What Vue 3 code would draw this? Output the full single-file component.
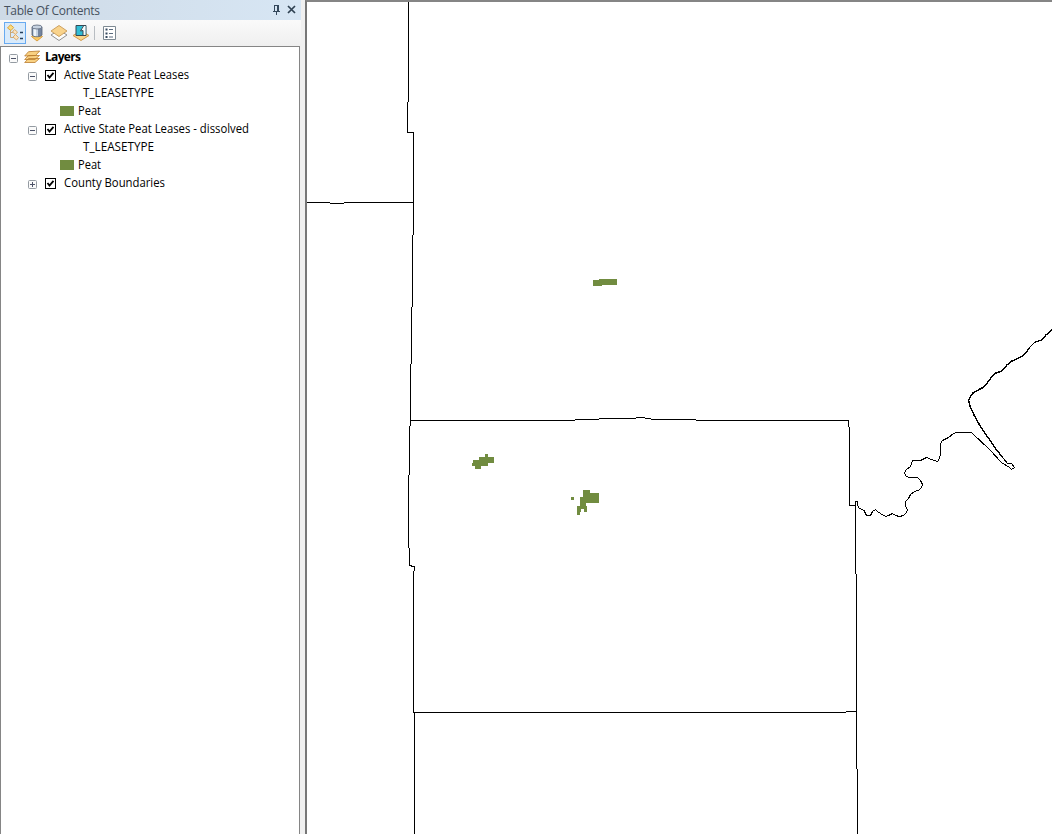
<script setup>
const rows = [
  { kind: 'layer', label: 'Active State Peat Leases', w: 125, open: true },
  { kind: 'field', label: 'T_LEASETYPE', w: 71 },
  { kind: 'symbol', label: 'Peat', w: 23 },
  { kind: 'layer', label: 'Active State Peat Leases - dissolved', w: 185, open: true },
  { kind: 'field', label: 'T_LEASETYPE', w: 71 },
  { kind: 'symbol', label: 'Peat', w: 23 },
  { kind: 'layer', label: 'County Boundaries', w: 101, open: false },
]
</script>

<template>
  <div class="window">
    <aside class="panel">
      <header class="titlebar">
        <svg class="label" width="98" height="18"><text x="0" y="15" textLength="96">Table Of Contents</text></svg>
        <svg class="pin" width="9" height="10" shape-rendering="crispEdges"><path d="M2.5 6V.5H6.5V6M5.5 1V6M1 6.5H8M4.5 7V10" /></svg>
        <svg class="close" width="9" height="9"><path d="M1 1L8 8M8 1L1 8" /></svg>
      </header>
      <nav class="toolbar">
        <button class="tool active">
          <svg width="18" height="18" viewBox="0 0 18 18">
            <path d="M4.500 6V13.500H8M4.500 8.500H8" fill="none" stroke="#c9a878" />
            <path d="M4.500 .8L7.700 3.500L5 6.500L1.500 4Z" fill="#fbdc80" stroke="#dca53c" />
            <path d="M8.500 5.500L11.500 8L9.500 10.500L6.500 8ZM9.500 10.500L12.500 13.500L10.500 16L7 13Z" fill="#fae3bf" stroke="#d8ad73" />
            <path d="M14 8.500H17M14 14.500H17" stroke="#243f5c" stroke-width="1.400" />
          </svg>
        </button>
        <button class="tool">
          <svg width="18" height="18" viewBox="0 0 18 18">
            <path d="M3.500 12.500L9 9L14.500 12.500L9 17Z" fill="#f9c964" stroke="#dba044" />
            <path d="M4 3V11C5 13.300 13 13.300 14 11V3" fill="#74859f" stroke="#566276" stroke-width=".8" />
            <path d="M5 4V11.300C6 12.200 8 12.500 10 12.300V4Z" fill="#c5d3e3" />
            <path d="M6 4H8V12H6Z" fill="#edf4fb" />
            <ellipse cx="9" cy="3" rx="5" ry="2" fill="#c7d3e1" stroke="#596579" stroke-width=".8" />
          </svg>
        </button>
        <button class="tool">
          <svg width="18" height="18" viewBox="0 0 18 18">
            <path d="M1 11L9 6L17 11L9 16.500Z" fill="#fcfcfa" stroke="#929292" />
            <path d="M1 7L9 1.500L17 7L9 12.500Z" fill="#f9d38b" stroke="#cda160" />
          </svg>
        </button>
        <button class="tool">
          <svg width="18" height="18" viewBox="0 0 18 18">
            <path d="M1 11.500L9 7L17 11.500L9 16.500Z" fill="#fad58b" stroke="#d29a4d" />
            <path d="M4 1.500H14V11.500H4Z" fill="#30bdd5" stroke="#344955" />
            <path d="M11 2H13.500V11H11V6.500L8.500 7L10 4Z" fill="#f8fbfc" />
            <path d="M11.500 2L8.500 7L11 6.500V11" fill="none" stroke="#344955" />
          </svg>
        </button>
        <i class="separator"></i>
        <button class="tool list-tool">
          <svg width="13" height="14" viewBox="0 0 13 14">
            <path d="M.5 .5H12.500V13.500H.5Z" fill="#fff" stroke="#7d8992" />
            <path d="M6 3.500H10M6 7.500H10M6 11H10" stroke="#5a6b7e" />
            <path d="M2.500 2.500H4.500V4.500H2.500ZM2.500 6.500H4.500V8.500H2.500ZM2.500 10H4.500V12H2.500Z" fill="#35495e" />
          </svg>
        </button>
      </nav>
      <main class="tree">
        <div class="row root">
          <svg class="expander" width="9" height="9"><rect x=".5" y=".5" width="8" height="8" rx="1" /><path d="M2 4.500H7" /></svg>
          <svg class="stack" width="17" height="14" viewBox="0 0 17 14">
            <path d="M.7 12.500L4.500 8.500H15.500L11 12.500Z M.7 9.500L4.500 5.500H15.500L11 9.500Z M.7 6L4.500 1.700L15.700 1L11.500 5.500Z" />
          </svg>
          <svg class="label bold" width="40" height="18"><text x="0" y="13" textLength="36">Layers</text></svg>
        </div>
        <div v-for="(row, i) in rows" :key="i" class="row" :class="row.kind">
          <template v-if="row.kind === 'layer'">
            <svg class="expander" width="9" height="9"><rect x=".5" y=".5" width="8" height="8" rx="1" /><path :d="row.open ? 'M2 4.5H7' : 'M2 4.5H7M4.5 2V7'" /></svg>
            <svg class="check" width="11" height="11"><rect x=".5" y=".5" width="10" height="10" /><path d="M2.500 5L4.500 7.500L8.500 2.800" /></svg>
          </template>
          <i v-if="row.kind === 'symbol'" class="swatch"></i>
          <svg class="label" :width="row.w + 2" height="18"><text x="0" y="13" :textLength="row.w" lengthAdjust="spacingAndGlyphs">{{ row.label }}</text></svg>
        </div>
      </main>
    </aside>
    <section class="map">
      <svg width="745" height="832" viewBox="307 2 745 832" shape-rendering="crispEdges">
        <g class="boundary">
          <path d="M408.500 0V102M407.500 102V132.500H413.500V235M412.500 235V307M411.500 307V364M410.500 364V426M409.500 426V475M408.500 475V548M409.500 548V565.500H411.500V566.500H414.500V571M413.500 571V713M414.500 713V834" />
          <path d="M307 202.500H330M330 203.500H344M344 202.500H414" />
          <path d="M411 420.500H575M575 419.500H599M599 418.500H636M636 417.500H645M645 418.500H651M651 419.500H696M696 420.500H848.500V427M849.500 427V505.500H855.500" />
          <path d="M855.500 505V574M856.500 574V769M857.500 769V834M414 712.500H846M846 711.500H857" />
          <path d="M855.500 505V501.500H857.500V505.500L859.500 508.500L864.500 510.500L865.500 514.500L867.500 515.500H870.500L872.500 511.500L875.500 509.500L877.500 511.500L880.500 513.500L885.500 516.500L888.500 515.500L892.500 513.500L895.500 515.500L899.500 516.500L903.500 515.500L906.500 512.500L907.500 509.500L905.500 506.500V501.500L908.500 498.500L910.500 494.500L914.500 491.500L920.500 489.500L922.500 484.500L920.500 480.500L917.500 477.500H908.500L905.500 475.500L904.500 472.500L906.500 469.500L910.500 466.500L912.500 460.500H920.500L926.500 457.500L931.500 459.500L937.500 461.500L939.500 458.500L940.500 453.500V443.500L942.500 440.500L948.500 437.500L953.500 433.500L956.500 432.500H971.500L989.500 449.500L1001.500 462.500L1009.500 467.500L1011.500 469.500L1014.500 467.500L1011.500 463.500H1007.500L1003.500 458.500L996.500 449.500L987.500 436.500L979.500 424.500L973.500 413.500" />
        </g>
        <path class="shore" d="M1007 462L1003 458L996 449L987 436L979 424L974 415L970 406L968.500 400L971 396L973 393L980 389L984 387L988 382L991 378L996 373L1002 371L1007 365L1012 361L1021 357L1026 353L1029 348L1035 342L1042 340L1046 335L1052 330" />
        <g class="leases">
          <path d="M593 280H599V279H617V285H602V286H593Z" />
          <path d="M472 463H473V460H479V457H485V454H488V457H494V463H488V466H481V469H475V466H472Z" />
          <path d="M571 497H574V500H571ZM583 490H590V493H599V503H586V506H587V512H584V509H581V512H580V515H577V506H580V497H583Z" />
        </g>
      </svg>
    </section>
  </div>
</template>

<style>
body { margin: 0; overflow: hidden; }
</style>
<style scoped>
.window { display: flex; width: 1052px; height: 834px; background: #f0f0f0; overflow: hidden; font-family: "Open Sans", "Noto Sans", sans-serif; }
.window * { box-sizing: border-box; }
svg { display: block; flex: none; }
.panel { width: 301px; flex: none; display: flex; flex-direction: column; }
.titlebar { height: 20px; background: linear-gradient(90deg, #cedae6, #d7e6f4); display: flex; align-items: flex-start; padding-left: 4px; }
.label { font-size: 12px; overflow: visible; fill: #000; }
.titlebar .label { fill: #46515e; }
.pin { margin: 5px 0 0 170px; fill: none; stroke: #34485c; }
.close { margin: 5px 0 0 6px; fill: none; stroke: #2f4152; stroke-width: 1.7; }
.toolbar { height: 26px; background: linear-gradient(#fafafa, #efefef); padding: 2px 4px; display: flex; align-items: center; }
.tool { width: 22px; height: 22px; padding: 0; border: 0; background: none; display: grid; place-items: center; }
.tool.active { border: 1px solid #68aaf0; background: #d8eafb; }
.separator { width: 1px; height: 14px; background: #b8bdc2; margin: 0 3px 0 2px; }
.tree { width: 300px; flex: 1; background: #fff; border: 1px solid #858585; border-bottom: 0; padding-top: 1px; }
.row { height: 18px; display: flex; align-items: flex-start; }
.root { padding-left: 8px; }
.layer { padding-left: 27px; }
.field { padding-left: 82px; }
.symbol { padding-left: 59px; }
.expander { margin-top: 6px; fill: #fafafa; stroke: #949ba2; }
.expander path { stroke: #4c5267; }
.stack { margin: 2px 4px 0 6px; fill: #f9d182; stroke: #b97b2e; stroke-width: .8; }
.bold { font-weight: 700; }
.check { margin: 4px 8px 0; fill: #fff; stroke: #000; }
.check path { fill: none; stroke-width: 1.8; }
.swatch { width: 14px; height: 10px; background: #718c40; margin: 4px 4px 0 0; }
.map { width: 747px; margin-left: 4px; background: #fff; border-top: 2px solid #858585; border-left: 2px solid #777; }
.boundary { fill: none; stroke: #000; stroke-width: 1; }
.shore { fill: none; stroke: #000; stroke-width: 1.4; }
.leases { fill: #718c40; }
</style>
